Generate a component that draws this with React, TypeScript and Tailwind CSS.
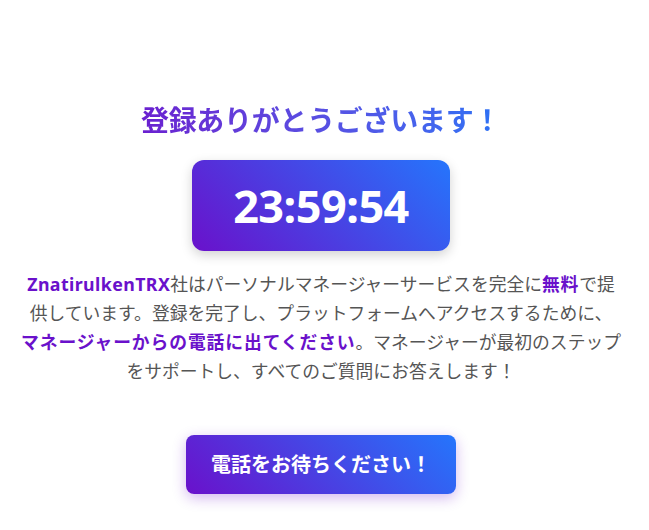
import React from 'react';

const font = "font-['Noto_Sans','Noto_Sans_CJK_JP',sans-serif]";

export default function App() {
  return (
    <div className={`min-h-screen bg-white ${font}`}>
      <div className="w-[642px] flex flex-col items-center pt-[103px]">
        {/* Title */}
        <h1 className="inline-block text-[28px] leading-[35px] font-bold tracking-[-0.3px] bg-gradient-to-r from-[#6a1fd0] to-[#2a72f5] bg-clip-text text-transparent">
          登録ありがとうございます！
        </h1>

        {/* Countdown */}
        <div className="mt-[22px] w-[258px] h-[91px] rounded-xl bg-[linear-gradient(45deg,#6a11cb,#2575fc)] shadow-[0_4px_12px_rgba(0,0,0,0.18)] flex items-center justify-center">
          <span className="text-white font-bold text-[45px] leading-none tracking-[-0.5px]">23:59:54</span>
        </div>

        {/* Message */}
        <p className="mt-[19px] text-center text-[17.8px] leading-[29px] text-[#555555] whitespace-nowrap">
          <span className="font-bold text-[#6a11cb] tracking-[0.4px]">ZnatirulkenTRX</span>社はパーソナルマネージャーサービスを完全に
          <span className="font-bold text-[#6a11cb] tracking-[0.8px]">無料</span>で提
          <br />
          供しています。登録を完了し、プラットフォームへアクセスするために、
          <br />
          <span className="font-bold text-[#6a11cb] tracking-[0.9px]">マネージャーからの電話に出てください</span>。マネージャーが最初のステップ
          <br />
          をサポートし、すべてのご質問にお答えします！
        </p>

        {/* Button */}
        <button className="mt-[49px] w-[270px] h-[59px] rounded-lg bg-[linear-gradient(45deg,#6a11cb,#2575fc)] text-white font-bold text-[20px] shadow-[0_4px_14px_rgba(106,17,203,0.3)]">
          電話をお待ちください！
        </button>
      </div>
    </div>
  );
}
